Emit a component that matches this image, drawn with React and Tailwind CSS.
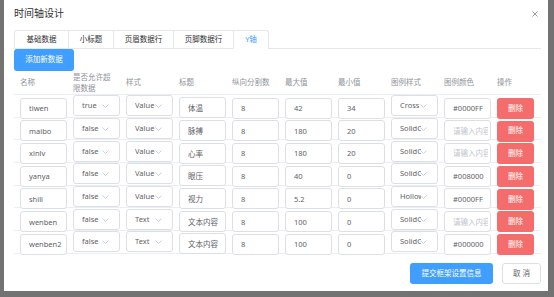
import React from 'react'

const tabs = [
  { label: '基础数据', w: 'w-[53px]' },
  { label: '小标题', w: 'w-[45px]' },
  { label: '页眉数据行', w: 'w-[60px]' },
  { label: '页脚数据行', w: 'w-[60px]' },
  { label: 'Y轴', w: 'w-[35px]', active: true },
]

const headers = ['名称', '是否允许超限数据', '样式', '标题', '纵向分割数', '最大值', '最小值', '图例样式', '图例颜色', '操作']

const rows = [
  ['tiwen', 'true', 'Value', '体温', '8', '42', '34', 'Cross', '#0000FF'],
  ['maibo', 'false', 'Value', '脉搏', '8', '180', '20', 'SolidCircle', ''],
  ['xinlv', 'false', 'Value', '心率', '8', '180', '20', 'SolidCircle', ''],
  ['yanya', 'false', 'Value', '眼压', '8', '40', '0', 'SolidCircle', '#008000'],
  ['shili', 'false', 'Value', '视力', '8', '5.2', '0', 'HollowCircle', '#0000FF'],
  ['wenben', 'false', 'Text', '文本内容', '8', '100', '0', 'SolidCircle', ''],
  ['wenben2', 'false', 'Text', '文本内容', '8', '100', '0', 'SolidCircle', '#000000'],
]

const Chevron = () => (
  <svg width="7" height="4" viewBox="0 0 7 4" className="absolute right-[10px] top-[8px]">
    <polyline points="0.5,0.5 3.5,3.5 6.5,0.5" fill="none" stroke="#c0c4cc" strokeWidth="0.8" />
  </svg>
)

const TextInput = ({ value, placeholder = '请输入内容' }) => (
  <input
    readOnly
    value={value}
    placeholder={placeholder}
    className="w-[47px] h-[21px] border border-[#dcdfe6] rounded-[3px] pl-[8px] pr-[2px] text-[7.5px] text-[#606266] placeholder:text-[#c0c4cc] outline-none bg-white"
  />
)

const SelectBox = ({ value }) => (
  <div className="relative w-[47px] h-[21px] border border-[#dcdfe6] rounded-[3px] bg-white">
    <div className="ml-[8px] w-[21px] h-full flex items-center overflow-hidden whitespace-nowrap text-[7.5px] text-[#606266]">
      {value}
    </div>
    <Chevron />
  </div>
)

const Row = ({ r }) => (
  <div className="flex h-[22.7px] items-center border-b border-[#ebeef5]">
    {r.map((v, i) => (
      <div key={i} className="w-[53px] shrink-0 pl-[6px]">
        {i === 1 || i === 2 || i === 7 ? <SelectBox value={v} /> : <TextInput value={v} />}
      </div>
    ))}
    <div className="w-[44px] shrink-0 pl-[6px]">
      <button className="w-[37px] h-[21px] rounded-[3px] bg-[#f56c6c] text-white text-[7.5px]">删除</button>
    </div>
  </div>
)

export default function App() {
  return (
    <div className="w-[554px] h-[297px] bg-[#727272] overflow-hidden pl-[4px] font-['Noto_Sans','Noto_Sans_CJK_SC',sans-serif]">
      <div className="w-[544px] h-[291px] bg-white flex flex-col pl-[10px] pr-[7px]">
        <div className="h-[27px] flex items-center justify-between">
          <span className="text-[10px] text-[#303133]">时间轴设计</span>
          <svg width="6" height="6" viewBox="0 0 6 6" className="mr-[3px]">
            <path d="M0.5 0.5 L5.5 5.5 M5.5 0.5 L0.5 5.5" stroke="#909399" strokeWidth="0.9" />
          </svg>
        </div>

        <div className="mt-[3px] border-b border-[#e4e7ed] flex">
          <div className="flex border border-b-0 border-[#e4e7ed] rounded-t-[3px] -mb-px">
            {tabs.map((t, i) => (
              <div
                key={t.label}
                className={`${t.w} h-[18px] flex items-center justify-center text-[7.5px] border-b ${i > 0 ? 'border-l border-l-[#e4e7ed]' : ''} ${t.active ? 'text-[#409eff] border-b-white' : 'text-[#303133] border-b-[#e4e7ed]'}`}
              >
                {t.label}
              </div>
            ))}
          </div>
        </div>

        <button className="w-[60px] h-[22px] bg-[#409eff] rounded-[3px] text-white text-[7.5px]">添加新数据</button>

        <div className="flex h-[24px] items-center border-b border-[#ebeef5] text-[7.5px] text-[#909399] leading-[11px]">
          {headers.map((h, i) => (
            <div key={h} className={`${i === 9 ? 'w-[44px]' : 'w-[53px]'} shrink-0 pl-[6px]`}>
              <div className="w-[40px]">{h}</div>
            </div>
          ))}
        </div>

        {rows.map((r, i) => (
          <Row key={i} r={r} />
        ))}

        <div className="mt-auto mb-[7px] flex justify-end gap-[9px]">
          <button className="w-[83px] h-[21px] bg-[#409eff] rounded-[3px] text-white text-[7.5px]">提交框架设置信息</button>
          <button className="w-[39px] h-[21px] border border-[#dcdfe6] rounded-[3px] bg-white text-[#606266] text-[7.5px]">取 消</button>
        </div>
      </div>
    </div>
  )
}
